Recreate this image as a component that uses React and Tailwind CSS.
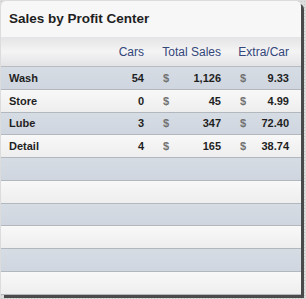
const rows = [
  { name: "Wash", cars: "54", total: "1,126", extra: "9.33" },
  { name: "Store", cars: "0", total: "45", extra: "4.99" },
  { name: "Lube", cars: "3", total: "347", extra: "72.40" },
  { name: "Detail", cars: "4", total: "165", extra: "38.74" },
  {},
  {},
  {},
  {},
  {},
  {},
];

const heights = ["h-[23px]", "h-[23px]", "h-[22px]", "h-[23px]", "h-[23px]", "h-[23px]", "h-[22px]", "h-[23px]", "h-[23px]", "h-[23px]"];

export default function App() {
  return (
    <div className="h-[299px] w-[306px] bg-[#dcdcdc] bg-[image:radial-gradient(#c4c4c4_1px,transparent_1px)] bg-[length:3px_3px] pl-px pt-px font-['Liberation_Sans',Arial,sans-serif]">
      <div className="flex h-[294px] w-[300px] flex-col overflow-hidden rounded-t-[5px] bg-[#f7f7f7] shadow-[3px_3px_0_#4a4a4a]">
        <div className="flex h-[36px] shrink-0 items-center pl-[8px] text-[13.5px] font-bold text-[#1f1f1f]">
          Sales by Profit Center
        </div>
        <div className="flex h-[30px] shrink-0 items-center border-b border-[#b9bcc2] bg-gradient-to-b from-[#e4e4e6] via-[#f4f4f5] to-[#e3e3e6] text-[12px] text-[#33467a]">
          <div className="w-[104px] shrink-0" />
          <div className="w-[39px] shrink-0 text-right">Cars</div>
          <div className="w-[77px] shrink-0 text-right">Total Sales</div>
          <div className="w-[68px] shrink-0 text-right">Extra/Car</div>
        </div>
        {rows.map((r, i) => (
          <div
            key={i}
            className={`flex shrink-0 items-center border-b border-[#b3b7be] text-[11px] font-bold text-[#1f1f1f] ${heights[i]} ${
              i % 2 === 0
                ? "bg-gradient-to-b from-[#d6dce4] to-[#d0d6df]"
                : "bg-gradient-to-b from-[#f8f8f8] to-[#eeeeee]"
            }`}
          >
            <div className="w-[104px] shrink-0 pl-[8px]">{r.name}</div>
            <div className="w-[39px] shrink-0 text-right">{r.cars}</div>
            <div className="flex w-[77px] shrink-0 justify-between pl-[19px]">
              <span className="text-[#727272]">{r.total ? "$" : ""}</span>
              <span>{r.total}</span>
            </div>
            <div className="flex w-[68px] shrink-0 justify-between pl-[19px]">
              <span className="text-[#727272]">{r.extra ? "$" : ""}</span>
              <span>{r.extra}</span>
            </div>
          </div>
        ))}
      </div>
    </div>
  );
}
